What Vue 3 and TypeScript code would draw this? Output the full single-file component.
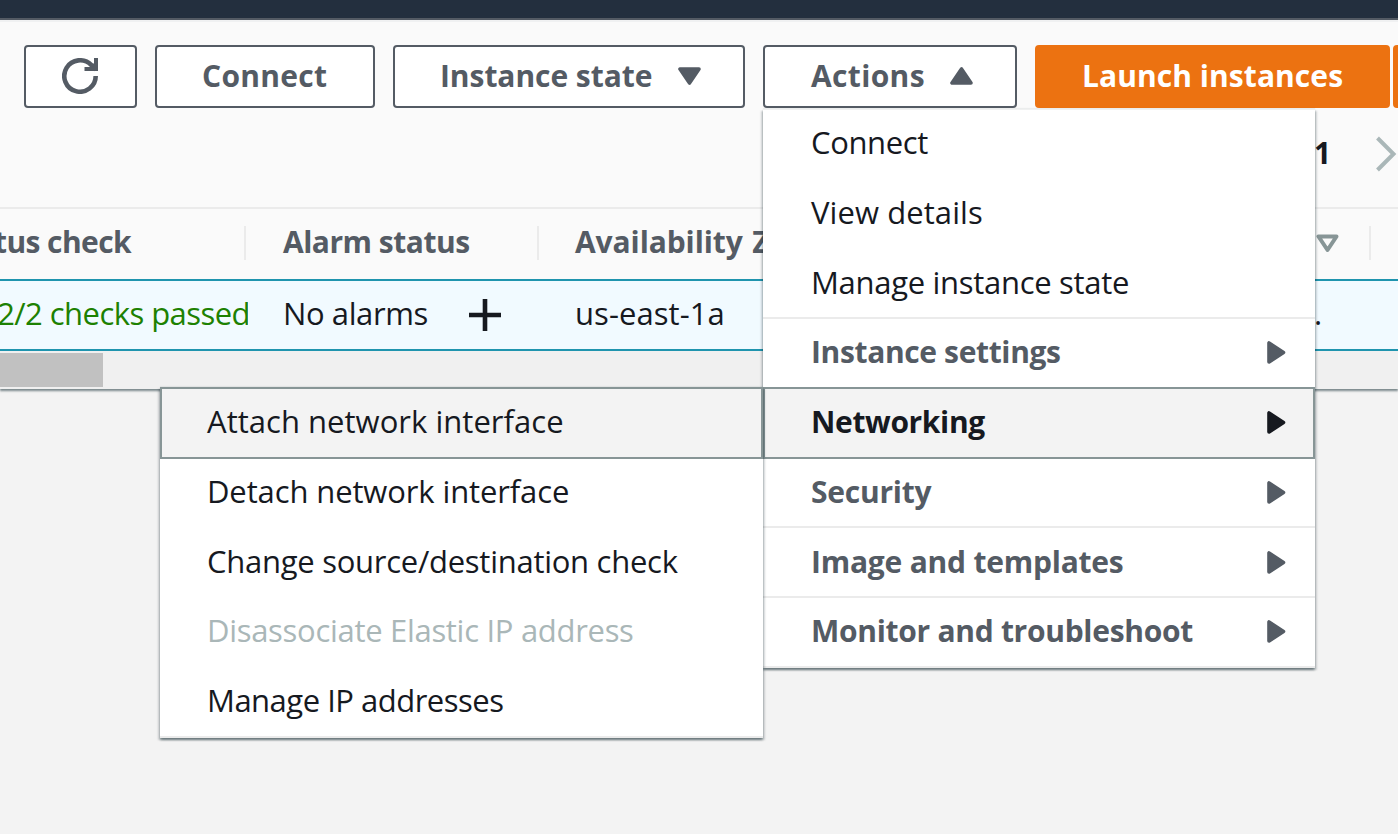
<script setup lang="ts">
interface MenuItem {
  label: string
  tracking: number
  group?: boolean
  active?: boolean
  disabled?: boolean
}

const actions: MenuItem[] = [
  { label: 'Connect', tracking: -0.36 },
  { label: 'View details', tracking: 0.08 },
  { label: 'Manage instance state', tracking: -0.3 },
  { label: 'Instance settings', tracking: -0.36, group: true },
  { label: 'Networking', tracking: -0.36, group: true, active: true },
  { label: 'Security', tracking: -0.25, group: true },
  { label: 'Image and templates', tracking: -0.22, group: true },
  { label: 'Monitor and troubleshoot', tracking: -0.29, group: true },
]

const networking: MenuItem[] = [
  { label: 'Attach network interface', tracking: 0.03, active: true },
  { label: 'Detach network interface', tracking: -0.12 },
  { label: 'Change source/destination check', tracking: -0.27 },
  { label: 'Disassociate Elastic IP address', tracking: -0.3, disabled: true },
  { label: 'Manage IP addresses', tracking: -0.5 },
]

const track = (n: number) => ({ letterSpacing: `${n}px` })
</script>

<template>
  <div class="page">
    <div class="topnav"></div>

    <section class="panel">
      <header class="toolbar">
        <div class="buttons">
          <button class="btn refresh" aria-label="Refresh">
            <svg width="36" height="36" viewBox="0 0 36 36">
              <path d="M33.7 18A15.7 15.7 0 1 1 29.4 7.2L34 11.5" fill="none" stroke="#545b64" stroke-width="4.6" />
              <path d="M32 0H36V13H22.500V9H28L32 5Z" fill="#545b64" />
            </svg>
          </button>
          <button class="btn connect"><span :style="track(0.29)">Connect</span></button>
          <button class="btn state">
            <span :style="track(-0.06)">Instance state</span>
            <svg width="23" height="18" viewBox="0 0 23 18">
              <path d="M2 2H21L11.500 16Z" fill="#545b64" stroke="#545b64" stroke-width="3.600" stroke-linejoin="round" />
            </svg>
          </button>
          <div class="dropdown">
            <button class="btn actions">
              <span :style="track(0.35)">Actions</span>
              <svg width="23" height="18" viewBox="0 0 23 18">
                <path d="M2 16H21L11.500 2Z" fill="#545b64" stroke="#545b64" stroke-width="3.600" stroke-linejoin="round" />
              </svg>
            </button>

            <div class="menu">
              <div
                v-for="item in actions"
                :key="item.label"
                class="item"
                :class="{ group: item.group, active: item.active }"
              >
                <span :style="track(item.tracking)">{{ item.label }}</span>
                <svg v-if="item.group" width="19" height="23" viewBox="0 0 19 23">
                  <path d="M2 2V21L16.500 11.500Z" fill="currentColor" stroke="currentColor" stroke-width="3.600" stroke-linejoin="round" />
                </svg>
              </div>
              <div class="menu submenu">
                <div
                  v-for="item in networking"
                  :key="item.label"
                  class="item"
                  :class="{ active: item.active, disabled: item.disabled }"
                >
                  <span :style="track(item.tracking)">{{ item.label }}</span>
                </div>
              </div>
            </div>
          </div>
          <div class="split">
            <button class="btn primary"><span :style="track(0.06)">Launch instances</span></button>
            <button class="btn primary more" aria-label="More launch options"></button>
          </div>
        </div>
        <div class="pager">
          <b>1</b>
          <svg width="22" height="36" viewBox="0 0 22 36">
            <path d="M2.500 2L18.500 18L2.500 34" fill="none" stroke="#aab7b8" stroke-width="4" />
          </svg>
        </div>
      </header>

      <div class="row head">
        <div class="cell status"><span :style="track(-0.6)">Status check</span></div>
        <div class="cell alarm"><span :style="track(-0.5)">Alarm status</span></div>
        <div class="cell zone"><span :style="track(-0.1)">Availability <i>Zone</i></span></div>
        <div class="cell dns">
          <svg width="23" height="19" viewBox="0 0 23 19">
            <path d="M2.500 2.500H20.500L11.500 16Z" fill="none" stroke="#879596" stroke-width="4" stroke-linejoin="round" />
          </svg>
        </div>
      </div>
      <div class="row data">
        <div class="cell status"><span :style="track(-0.55)">2/2 checks passed</span></div>
        <div class="cell alarm">
          <span :style="track(-0.4)">No alarms</span>
          <svg width="32" height="32" viewBox="0 0 32 32">
            <path d="M16 0V32M0 16H32" stroke="#16191f" stroke-width="4.600" />
          </svg>
        </div>
        <div class="cell zone"><span :style="track(0.06)">us-east-1a</span></div>
        <div class="cell dns"><span>.</span></div>
      </div>
      <div class="scrollbar"><div class="thumb"></div></div>
    </section>
  </div>
</template>

<style>
body {
  background: #f3f3f3;
}
</style>

<style scoped>
.page {
  width: 1398px;
  height: 834px;
  overflow: hidden;
  background: #f3f3f3;
  color: #16191f;
  font: 400 31px/42px "Open Sans", "Noto Sans", sans-serif;
  white-space: nowrap;
}

.topnav {
  box-sizing: border-box;
  height: 20px;
  background: #232f3e;
  border-bottom: 2px solid #545b64;
}

.panel {
  position: relative;
  background: #fafafa;
  box-shadow: 0 2px 2px rgba(0, 28, 36, 0.5);
}

.toolbar {
  box-sizing: border-box;
  height: 189px;
  padding: 23px 0 0 24px;
  border-top: 2px solid #f0f1f2;
  border-bottom: 2px solid #ebebeb;
}

.buttons {
  display: flex;
  gap: 18px;
}

.btn {
  box-sizing: border-box;
  display: flex;
  flex: none;
  align-items: center;
  justify-content: space-between;
  height: 63px;
  margin: 0;
  padding: 0 42.5px 0 45px;
  border: 2px solid #545b64;
  border-radius: 4px;
  background: #fff;
  color: #545b64;
  font: 700 30px/56px "Open Sans", "Noto Sans", sans-serif;
}

.btn span {
  padding-bottom: 1px;
}

.btn svg {
  position: relative;
  top: -0.5px;
}

.refresh {
  width: 113px;
  padding: 0 36px;
}

.connect {
  width: 220px;
}

.state {
  width: 352px;
}

.actions {
  width: 254px;
  padding-left: 46px;
}

.split {
  display: flex;
  gap: 3px;
}

.primary {
  width: 355px;
  border-color: #ec7211;
  background: #ec7211;
  color: #fff;
}

.more {
  width: 80px;
}

.dropdown {
  position: relative;
}

.menu {
  position: absolute;
  z-index: 2;
  top: 65px;
  left: 0;
  box-sizing: border-box;
  width: 552px;
  height: 557px;
  background: #fff;
  box-shadow: 0 2px 2px rgba(0, 28, 36, 0.4), 2px 2px 2px rgba(0, 28, 36, 0.15),
    -2px 2px 2px rgba(0, 28, 36, 0.15), 0 -1px 1px rgba(0, 28, 36, 0.06);
}

.dropdown > .menu {
  display: flex;
  flex-direction: column;
  margin-top: -1px;
  border-top: 1px solid #f0f1f1;
  height: 559px;
  border-bottom: 2px solid #ebebeb;
}

.item {
  box-sizing: border-box;
  display: flex;
  flex: none;
  align-items: center;
  justify-content: space-between;
  height: 69.75px;
  padding: 0 29px 1.5px 47px;
}

.dropdown > .menu > .item {
  padding-bottom: 0;
  padding-left: 48px;
}

.dropdown > .menu > .item:first-child {
  height: 67.5px;
  padding-bottom: 3px;
}

.dropdown > .menu > .item.group {
  border-top: 2px solid #ebebeb;
  padding-bottom: 1px;
  color: #545b64;
  font-size: 30px;
  font-weight: 700;
}

.group svg {
  position: relative;
  top: 0.5px;
}

.dropdown > .menu > .item.active,
.item.active {
  height: 72px;
  margin-bottom: -2.25px;
  padding: 0 27px 4px 45px;
  border: 2px solid #879596;
  background: #f3f3f3;
  color: #16191f;
  z-index: 1;
}

.dropdown > .menu > .item.active {
  padding-bottom: 1px;
  padding-left: 46px;
}

.dropdown > .menu > .item.active + .group {
  border-top-color: transparent;
}

.item.disabled {
  color: #aab7b8;
}

.submenu {
  top: 277px;
  left: -603px;
  width: 603px;
  height: 351px;
  border-bottom: 2px solid #ebebeb;
}

.pager {
  display: flex;
  align-items: center;
  gap: 42px;
  margin: 24px 0 0 1290px;
}

.pager b {
  width: 19px;
  padding-bottom: 2px;
  font-size: 30px;
}

.row {
  box-sizing: border-box;
  display: flex;
  height: 70px;
}

.cell {
  position: relative;
  box-sizing: border-box;
  display: flex;
  flex: none;
  align-items: center;
}

.status {
  width: 246px;
  justify-content: flex-end;
  overflow: hidden;
}

.alarm {
  width: 293px;
  padding-left: 37px;
  gap: 41px;
}

.zone {
  width: 777px;
  padding-left: 36px;
}

.zone i {
  margin-left: 2px;
  font-style: normal;
}

.dns {
  width: 55px;
}

.head {
  color: #545b64;
  font-size: 30px;
  font-weight: 700;
}

.head .cell {
  margin: 17px 0 19px;
  border-right: 2px solid #ebebeb;
}

.head .cell span {
  padding-bottom: 2px;
}

.head .status {
  padding-right: 113px;
  overflow: visible;
}

.head .zone {
  border-right-color: transparent;
}

.data {
  height: 72px;
  border: solid #1f94ae;
  border-width: 2px 0;
  background: #f1faff;
}

.data .cell span {
  padding-bottom: 4px;
}

.data .dns span {
  margin-left: -2px;
}

.data .status {
  width: 248px;
  margin-right: -2px;
  color: #1d8102;
}

.data .status span {
  margin-right: -2px;
}

.scrollbar {
  box-sizing: border-box;
  height: 38px;
  padding: 2px 0;
  background: #f0f0f0;
}

.thumb {
  width: 103px;
  height: 34px;
  background: #c1c1c1;
}
</style>
